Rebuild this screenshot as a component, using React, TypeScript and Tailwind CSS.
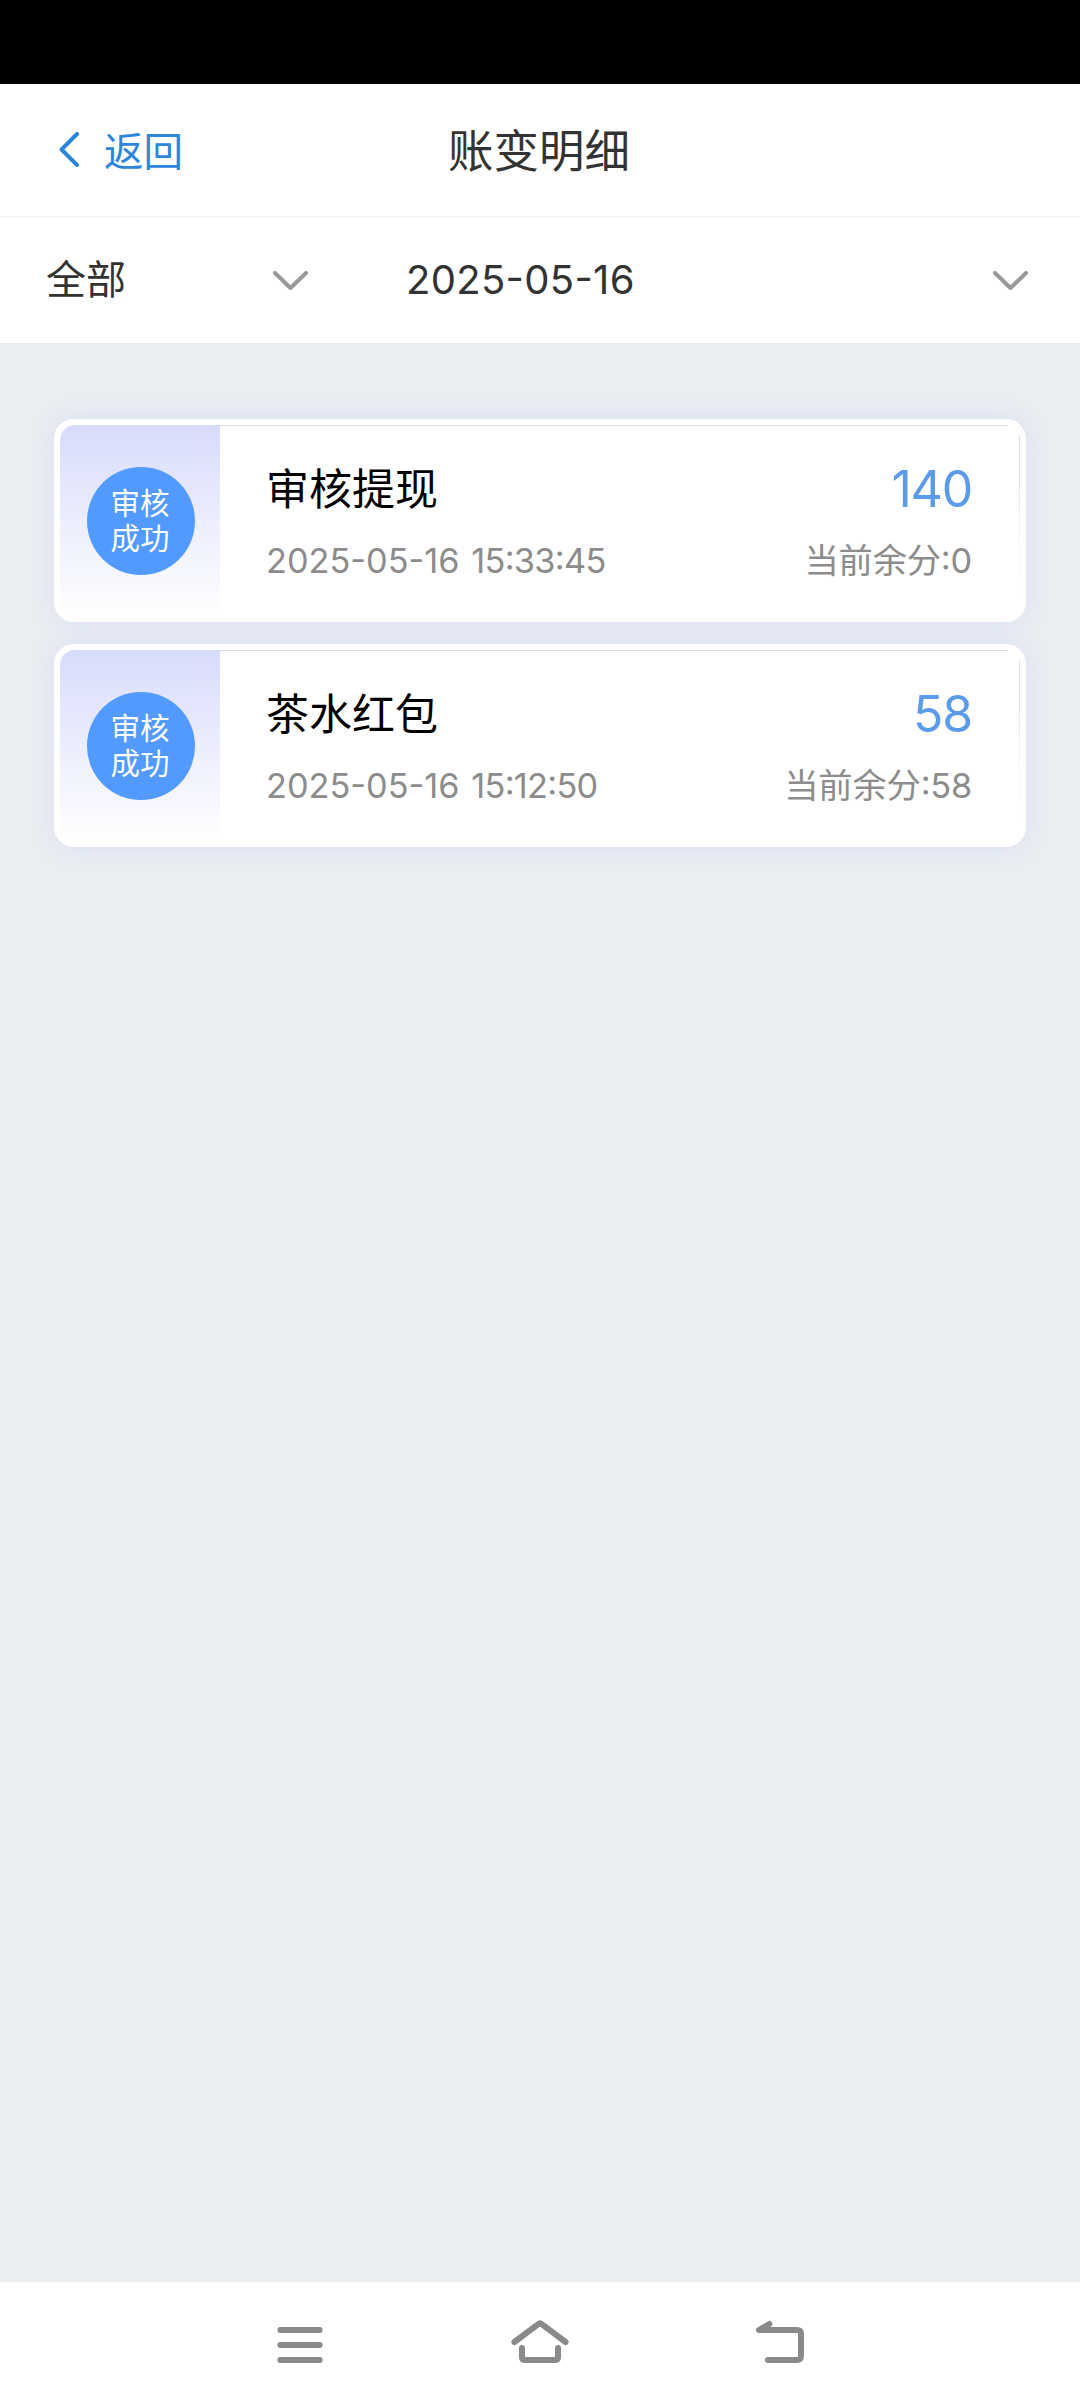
type RecordItem = {
  title: string;
  date: string;
  time: string;
  amount: string;
  balance: string;
};

const records: RecordItem[] = [
  { title: "审核提现", date: "2025-05-16", time: "15:33:45", amount: "140", balance: "0" },
  { title: "茶水红包", date: "2025-05-16", time: "15:12:50", amount: "58", balance: "58" },
];

function ChevronDown() {
  return (
    <svg className="block h-[19px] w-[35px]" viewBox="0 0 35 19" fill="none" stroke="#999999" strokeWidth="4" strokeLinecap="round" strokeLinejoin="round">
      <path d="M2 2 L17.5 17 L33 2" />
    </svg>
  );
}

function Header() {
  return (
    <header className="grid h-[133px] grid-cols-[1fr_auto_1fr] items-center border-b border-[#f0f0f0] bg-white">
      <button className="flex items-center pl-[57px] text-[#2d85dc]">
        <svg className="block h-[36px] w-[22px]" viewBox="0 0 22 36" fill="none" stroke="currentColor" strokeWidth="4" strokeLinecap="round" strokeLinejoin="round">
          <path d="M20 2 L4.5 17.5 L20 33" />
        </svg>
        <span className="ml-[25px] pt-[3px] text-[39.5px] leading-[40px]">返回</span>
      </button>
      <h1 className="pt-[3px] pr-[2px] text-[45.5px] leading-[48px] text-[#333333]">账变明细</h1>
      <div />
    </header>
  );
}

function Filters() {
  return (
    <div className="flex h-[126px] items-center bg-white text-[40px] leading-[40px] text-[#333333]">
      <div className="flex w-[360px] items-center justify-between pr-[52px] pl-[46px]">
        <span>全部</span>
        <ChevronDown />
      </div>
      <div className="flex flex-1 items-center justify-between pr-[52px] pl-[46px]">
        <span className="tracking-[0.3px]">2025-05-16</span>
        <ChevronDown />
      </div>
    </div>
  );
}

function RecordCard({ item }: { item: RecordItem }) {
  return (
    <section className="flex h-[203px] rounded-[20px] bg-white p-[6px] shadow-[0_0_24px_#dadef7]">
      <div className="flex w-[160px] items-center justify-center rounded-l-[15px] bg-linear-to-b from-[#d8dcfb] to-white pl-[2px]">
        <div className="flex size-[108px] items-center justify-center rounded-full bg-[#529aff] pr-[2px] text-center text-[29.5px] leading-[35px] text-white">
          审核
          <br />
          成功
        </div>
      </div>
      <div className="flex flex-1 flex-col">
        <div className="mr-[12px] h-px bg-[#d6e0ea]" />
        <div className="flex flex-1">
          <div className="flex flex-1 flex-col gap-[25px] pt-[36px] pr-[47px] pl-[46px]">
            <div className="flex h-[54px] items-center justify-between">
              <h2 className="text-[43px] leading-[54px] text-black">{item.title}</h2>
              <span className="text-[50px] leading-[54px] tracking-[-1.2px] text-[#5b9bea]">{item.amount}</span>
            </div>
            <div className="flex items-center justify-between text-[34.3px] leading-[40px] text-[#8c8c8c]">
              <span>
                {item.date} <span className="ml-[2px] tracking-[-0.7px]">{item.time}</span>
              </span>
              <span className="tracking-[-0.2px]">当前余分:{item.balance}</span>
            </div>
          </div>
          <div className="mt-[9px] mb-[20px] w-px bg-linear-to-b from-[#dcdfe6] to-white" />
        </div>
      </div>
    </section>
  );
}

function NavBar() {
  return (
    <nav className="flex h-[126px] items-center justify-center bg-white text-[#8a8a8a]">
      <button className="flex w-[240px] justify-center">
        <svg className="block size-[60px]" viewBox="0 0 60 60" fill="none" stroke="currentColor" strokeWidth="6" strokeLinecap="round">
          <path d="M10.4 15H49.6M10.4 30H49.6M10.4 45H49.6" />
        </svg>
      </button>
      <button className="flex w-[240px] justify-center">
        <svg className="block size-[60px]" viewBox="0 0 60 60" fill="none" stroke="currentColor" strokeWidth="6" strokeLinecap="round" strokeLinejoin="round">
          <path d="M4.4 27L29 8.6Q30 8 31 8.6L55.6 27" />
          <path d="M12 33V42Q12 45 15 45H45Q48 45 48 42V33" />
        </svg>
      </button>
      <button className="flex w-[240px] justify-center">
        <svg className="block size-[60px]" viewBox="0 0 60 60" fill="none" stroke="currentColor" strokeWidth="6" strokeLinecap="round" strokeLinejoin="round">
          <path d="M19.4 9L9 15H47Q51 15 51 19V41Q51 45 47 45H18" />
        </svg>
      </button>
    </nav>
  );
}

export default function App() {
  return (
    <div className="flex h-[2408px] w-[1080px] flex-col bg-[#e9eef1] font-['Inter','Noto_Sans_CJK_SC',sans-serif] [font-feature-settings:'case']">
      <div className="h-[84px] bg-black" />
      <Header />
      <Filters />
      <main className="flex flex-1 flex-col gap-[22px] px-[54px] pt-[76px]">
        {records.map((item) => (
          <RecordCard key={item.time} item={item} />
        ))}
      </main>
      <NavBar />
    </div>
  );
}
